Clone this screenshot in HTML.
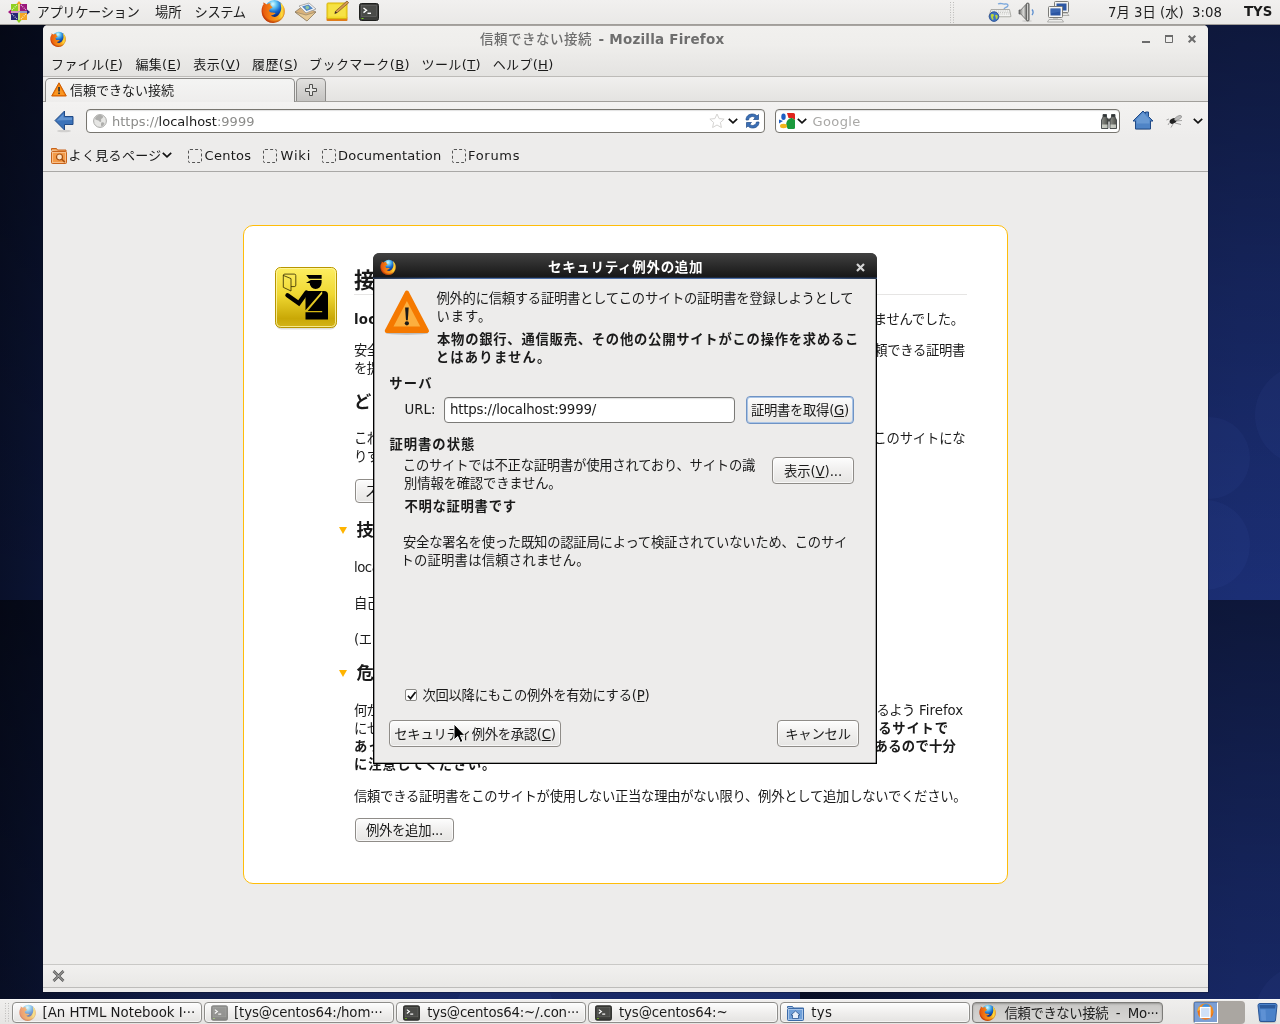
<!DOCTYPE html>
<html lang="ja">
<head>
<meta charset="utf-8">
<title>信頼できない接続 - Mozilla Firefox</title>
<style>
*{box-sizing:border-box;margin:0;padding:0}
html,body{width:1280px;height:1024px;overflow:hidden}
body{font-family:"DejaVu Sans","Liberation Sans","Noto Sans CJK JP",sans-serif;font-size:13px;color:#1a1a1a;position:relative;background:#0b1535}
#root{position:absolute;left:0;top:0;width:1280px;height:1024px;overflow:hidden;will-change:transform}
.abs{position:absolute}
.t{position:absolute;white-space:nowrap;line-height:20px;height:20px}
#win .t{line-height:22px}
u{text-decoration:underline;text-underline-offset:1px}
/* desktop wallpaper */
.wt{position:absolute;width:800px;height:600px;overflow:hidden;
 background:
 linear-gradient(180deg,rgba(0,0,0,.5) 0,rgba(0,0,0,.36) 25%,rgba(0,0,0,.22) 50%,rgba(0,0,0,.1) 75%,rgba(0,0,0,0) 100%),
 linear-gradient(90deg,#09102a 0,#0a122e 20px,#0e1942 100px,#152458 200px,#182968 300px,#1b2e74 440px,#1d327c 800px)}
.wt i{position:absolute;border-radius:50%;background:rgba(120,150,255,.045)}
/* top panel */
#tp{left:0;top:0;width:1280px;height:25px;background:linear-gradient(#f1f0ef,#eae9e7);border-bottom:1px solid #a19e9a;z-index:5}
#bp{left:0;top:999px;width:1280px;height:25px;background:linear-gradient(#efeeed,#e6e5e3);border-top:1px solid #fafafa}
/* firefox window */
#win{left:43px;top:25px;width:1165px;height:967px;background:#edeceb;border-radius:5px 5px 0 0;box-shadow:0 0 0 1px rgba(10,12,30,.3)}
#tm{left:0;top:0;width:100%;height:51px;border-radius:5px 5px 0 0;background:linear-gradient(#a7a4a0 0,#a7a4a0 1px,#f1f0ee 1px,#efeeec 20px,#e4e3e1 51px)}
#titlebar{left:0;top:0;width:100%;height:27px}
#menubar{left:0;top:27px;width:100%;height:25px;border-bottom:1px solid #bdbbb8}

/* icons */
.ic{position:absolute;overflow:visible}
#tp .t{top:2px;font-size:13.3px;color:#1c1c1c}

#win .t{font-size:13px}
#tabbar{left:0;top:52px;width:100%;height:25px;background:linear-gradient(#f0efee,#e4e3e1);border-bottom:1px solid #a19f9b}
#tab1{left:2px;top:53px;width:250px;height:25px;background:linear-gradient(#f4f4f3,#eeedec);border:1px solid #8d8c8a;border-bottom:none;border-radius:5px 5px 0 0}
#tabnew{left:253px;top:53px;width:30px;height:23px;background:linear-gradient(#e2e1df,#d3d2d0 50%,#c5c4c2);border:1px solid #8d8c8a;border-bottom:none;border-radius:5px 5px 0 0}
#navbar{left:0;top:77px;width:100%;height:37px;background:linear-gradient(#f3f2f1,#edeceb)}
.field{position:absolute;top:84px;height:24px;background:#fff;border:1px solid #77756f;border-radius:4px;box-shadow:inset 0 1px 1px rgba(0,0,0,.12)}
#bmbar{left:0;top:114px;width:100%;height:33px;background:#edeceb;border-bottom:1px solid #a9a8a6}
.bmi{position:absolute;top:124px;width:14px;height:14px;border:1px dashed #555;border-radius:2px}
#content{left:0;top:147px;width:100%;height:792px;background:#edeceb;overflow:hidden}
#status{left:0;top:939px;width:100%;height:24px;background:linear-gradient(#f1f0ef,#e9e8e6);border-top:1px solid #c9c8c6;border-bottom:1px solid #bdbcba}

#pg{position:absolute;left:-43px;top:-172px;width:1280px;height:1024px}
#errc{position:absolute;left:243px;top:225px;width:765px;height:659px;background:#fff;border:1px solid #ffbd09;border-radius:10px}
#pg .p b{letter-spacing:.3px}
#pg .p .fx b{letter-spacing:inherit}
#pg .p{letter-spacing:-.5px;position:absolute;white-space:nowrap;font-size:13.330px;line-height:18px;height:18px;color:#1a1a1a}
#pg h1{position:absolute;left:354px;top:266px;width:613px;height:29px;font-size:21.300px;font-weight:bold;line-height:30px;border-bottom:1px solid #e6e5e4;white-space:nowrap;overflow:hidden}
#pg h2{position:absolute;left:354px;font-size:17.300px;font-weight:normal;line-height:24px;height:24px;white-space:nowrap}
#pg h2.b{font-weight:bold}
.tri{position:absolute;width:0;height:0;border-left:4px solid transparent;border-right:4px solid transparent;border-top:7px solid #ffb400}
.btn{position:absolute;height:24px;border:1px solid #8f8c88;border-radius:4px;background:linear-gradient(#fdfdfd,#f1f0ef 45%,#e6e5e3);font-size:13.330px;letter-spacing:-.3px;line-height:24.500px;text-align:center;white-space:nowrap;color:#1a1a1a;box-shadow:inset 0 0 0 1px rgba(255,255,255,.7)}

#dlg{left:373px;top:253px;width:504px;height:511px;background:#edeceb;border:1px solid #000;border-top:none;border-radius:7px 7px 0 0;box-shadow:inset 1px 0 0 rgba(0,0,0,.35),inset -1px 0 0 rgba(0,0,0,.3),inset 0 -1px 0 rgba(0,0,0,.3)}
#dtitle{left:-1px;top:0;width:504px;height:26px;border-radius:6px 6px 0 0;background:linear-gradient(#414141,#2c2c2c 45%,#181818 90%,#1c2638 94%,#4a6a9c 100%)}
#dlg .t{font-size:13.330px;letter-spacing:-.45px;line-height:18px;height:18px;color:#1a1a1a}
#dlg .btn{font-size:13.330px;letter-spacing:-.45px;height:27px;line-height:27px}
.inp{position:absolute;background:#fff;border:1px solid #7b7a77;border-radius:4px;box-shadow:inset 0 1px 1px rgba(0,0,0,.13)}

.tb{position:absolute;top:2px;height:21px;width:190px;border:1px solid #8e8d8a;border-radius:4px;background:linear-gradient(#fdfdfd,#f0efee 50%,#e4e3e1);box-shadow:inset 0 0 0 1px rgba(255,255,255,.6)}
.tb.act{background:linear-gradient(#c9c8c6,#d6d5d3);box-shadow:inset 0 1px 2px rgba(0,0,0,.25);border-color:#7d7c79}
.tb .t{left:30px;top:0px;font-size:13.330px;color:#1a1a1a;letter-spacing:0}
.tb .ic{left:6px;top:2px}
</style>
</head>
<body>
<div id="root">
<svg width="0" height="0" style="position:absolute">
<defs>
<radialGradient id="ffg" cx="42%" cy="22%" r="75%"><stop offset="0" stop-color="#d8fbff"/><stop offset=".28" stop-color="#5fc3f2"/><stop offset=".6" stop-color="#1565c8"/><stop offset="1" stop-color="#061a6e"/></radialGradient>
<linearGradient id="fff" x1="0" y1="0" x2="1" y2="0"><stop offset="0" stop-color="#e4520c"/><stop offset=".35" stop-color="#f47c12"/><stop offset=".7" stop-color="#f9a21c"/><stop offset=".88" stop-color="#ffdf3e"/><stop offset="1" stop-color="#e8901c"/></linearGradient>
<radialGradient id="ffs" gradientUnits="userSpaceOnUse" cx="12.800" cy="10.500" r="13.500"><stop offset=".78" stop-color="#a01800" stop-opacity="0"/><stop offset="1" stop-color="#a01800" stop-opacity=".75"/></radialGradient>
<symbol id="ff" viewBox="0 0 24 24">
<circle cx="13.300" cy="10.200" r="9.200" fill="url(#ffg)"/>
<path d="M2.500 3.600C3.700 4.300 4.800 5 5.900 5.400 7.200 4.500 8.400 4.200 9.700 4.300 9.200 5 9.100 5.600 9.500 6.200 10.300 7.100 11.100 7.600 11.700 8.400 10.700 8.900 9.800 9.200 9.200 9.900 8.600 10.400 8.200 10.800 8.100 11.300 8.400 12.700 9.300 13.500 10.500 13.600 12 13.700 13.300 13.600 14.700 14.300 13.800 15.200 12.400 15.700 10 16.600 11.200 17.600 12.400 18 13.800 18 16 17.600 17.600 16.300 18.300 14.800 19.600 12.900 20.300 10.900 20.200 8.800 20.100 7 19.800 5.300 19.400 3.500 21.300 5 22.800 7 23.500 9.500 24.400 13.400 23.300 17.600 20.300 20.600 17.200 23.600 12.800 24.600 8.800 23.400 4.300 22 1 17.900.7 12.700.5 9.800 1.200 7.200 2.700 5.300 2.500 4.700 2.400 4.200 2.500 3.600z" fill="url(#fff)"/><path d="M2.500 3.600C3.700 4.300 4.800 5 5.900 5.400 7.200 4.500 8.400 4.200 9.700 4.300 9.200 5 9.100 5.600 9.500 6.200 10.300 7.100 11.100 7.600 11.700 8.400 10.700 8.900 9.800 9.200 9.200 9.900 8.600 10.400 8.200 10.800 8.100 11.300 8.400 12.700 9.300 13.500 10.500 13.600 12 13.700 13.300 13.600 14.700 14.300 13.800 15.200 12.400 15.700 10 16.600 11.200 17.600 12.400 18 13.800 18 16 17.600 17.600 16.300 18.300 14.800 19.600 12.900 20.300 10.900 20.200 8.800 20.100 7 19.800 5.300 19.400 3.500 21.300 5 22.800 7 23.500 9.500 24.400 13.400 23.300 17.600 20.300 20.600 17.200 23.600 12.800 24.600 8.800 23.400 4.300 22 1 17.900.7 12.700.5 9.800 1.200 7.200 2.700 5.300 2.500 4.700 2.400 4.200 2.500 3.600z" fill="url(#ffs)"/>

</symbol>
<symbol id="term" viewBox="0 0 20 18">
<rect x=".5" y=".5" width="19" height="17" rx="2" fill="#3c3d3a" stroke="#1f201e"/>
<rect x="2.500" y="2.500" width="15" height="11" fill="#4a4b48" stroke="#6b6c69" stroke-width=".6"/>
<path d="M4.500 5l3 2.300-3 2.300" stroke="#fff" stroke-width="1.400" fill="none"/><path d="M8.500 10.300h3.500" stroke="#fff" stroke-width="1.400"/>
<rect x="2.500" y="15" width="2" height="1" fill="#7ed321"/>
</symbol>
</defs></svg>
<div class="wt" style="left:0px;top:0px"><i style="left:368px;top:417px;width:82px;height:82px"></i><i style="left:455px;top:365px;width:100px;height:100px"></i><i style="left:360px;top:500px;width:90px;height:90px"></i></div><div class="wt" style="left:800px;top:0px"><i style="left:368px;top:417px;width:82px;height:82px"></i><i style="left:455px;top:365px;width:100px;height:100px"></i><i style="left:360px;top:500px;width:90px;height:90px"></i></div><div class="wt" style="left:0px;top:600px"><i style="left:368px;top:417px;width:82px;height:82px"></i><i style="left:455px;top:365px;width:100px;height:100px"></i><i style="left:360px;top:500px;width:90px;height:90px"></i></div><div class="wt" style="left:800px;top:600px"><i style="left:368px;top:417px;width:82px;height:82px"></i><i style="left:455px;top:365px;width:100px;height:100px"></i><i style="left:360px;top:500px;width:90px;height:90px"></i></div>
<div id="tp" class="abs">
<svg class="ic" style="left:8px;top:1px" width="22" height="22" viewBox="0 0 22 22">
<path d="M11 0l3 3.500h-6z" fill="#f5a623"/><path d="M22 11l-3.500 3v-6z" fill="#262577"/><path d="M11 22l-3-3.500h6z" fill="#8fd01f"/><path d="M0 11l3.500-3v6z" fill="#a3177f"/>
<rect x="3" y="3" width="7" height="7" fill="#8fd01f"/><rect x="12" y="3" width="7" height="7" fill="#9a177c"/><rect x="3" y="12" width="7" height="7" fill="#262577"/><rect x="12" y="12" width="7" height="7" fill="#f5a623"/>
<rect x="10" y="3" width="2" height="8" fill="#f8c97a"/><rect x="11" y="10" width="8" height="2" fill="#9a9ac4"/><rect x="10" y="11" width="2" height="8" fill="#c4e58a"/><rect x="3" y="10" width="8" height="2" fill="#d493c3"/>
<path d="M4 9l5-5M13 4l5 5M4 13l5 5M13 18l5-5" stroke="#fff" stroke-width="1.200" stroke-dasharray="1 1" opacity=".7"/>
</svg>
<div class="t" style="left:36.500px;top:3px;letter-spacing:-.4px">アプリケーション</div>
<div class="t" style="left:155px;top:3px">場所</div>
<div class="t" style="left:194.500px;top:3px;letter-spacing:-.4px">システム</div>
<svg class="ic" style="left:261px;top:-1px" width="24" height="24"><use href="#ff"/></svg>
<svg class="ic" style="left:294px;top:3px" width="23" height="19" viewBox="0 0 23 19">
<path d="M1 9l8-6 13 6-9 9z" fill="#d9b27a" stroke="#8a7a62" stroke-width=".8"/>
<path d="M1 9l11 3 10-3-9 9z" fill="#e7c994" stroke="#8a7a62" stroke-width=".6"/>
<path d="M5 3l10-3 7 6-10 4z" fill="#f4f4f4" stroke="#9a9a9a" stroke-width=".8"/>
<path d="M8 3.500l6.500-2 4.500 4-6.500 2.500z" fill="#4f86c6"/><circle cx="13.300" cy="4.600" r="1.800" fill="#8fc7a0"/>
</svg>
<svg class="ic" style="left:326px;top:0" width="24" height="22" viewBox="0 0 24 22">
<rect x=".5" y="17" width="21" height="4" rx="1" fill="#e07d1a"/>
<rect x="1" y="3" width="20" height="15.500" rx="1" fill="#f3da2b" stroke="#d9b50f"/>
<rect x="2.500" y="4.500" width="17" height="12" fill="#f7e652" opacity=".7"/>
<path d="M21 1l1.700 1.700-11.500 10-2.400.9.700-2.400z" fill="#d59a54" stroke="#7a5220" stroke-width=".7"/>
<path d="M8.800 13.600l.7-2.400 1.700 1.500z" fill="#222"/>
</svg>
<svg class="ic" style="left:359px;top:3px" width="20" height="18"><use href="#term"/></svg>
<svg class="ic" style="left:949px;top:2px" width="6" height="21"><path d="M1.500 0v21M4.500 0v21" stroke="#bdbcba" stroke-width="1" stroke-dasharray="1 1.500"/></svg>
<svg class="ic" style="left:988px;top:2px" width="24" height="21" viewBox="0 0 24 21">
<path d="M10 2c3-1.500 4 .5 7 0s3.500 1.500 2.500 2.500-3 1-3.500 2.500" stroke="#7aa7dc" stroke-width="1.300" fill="none"/>
<path d="M3 7.500h18.500l1.500 7h-22z" fill="#f4f4f2" stroke="#9a9a96" stroke-width=".8"/>
<path d="M3.500 9h17.500M3 10.500h18.500M2.600 12h19.300" stroke="#c2c2be" stroke-width=".9" stroke-dasharray="1.200 1"/>
<path d="M1.500 14.500h21v1.200h-21z" fill="#d6d6d2"/>
<circle cx="6" cy="14.600" r="4.800" fill="#3f74c4" stroke="#2a4f8f" stroke-width=".9"/>
<path d="M3 12.500c1.200-.8 2.600-.3 3 .6.300.9-.8 1.300-.9 2.200s.9 1.500.2 2.500c-.9.300-1.600-.9-2-1.900s-.9-2.300-.3-3.400zM7.500 13c.8-.4 1.800 0 2.300.9 0 1.300-.5 2.600-1.600 3.400-.5-.8-.3-1.800-.7-2.600s-.5-1.200 0-1.700z" fill="#b9d43c"/>
</svg>
<svg class="ic" style="left:1018px;top:2px" width="18" height="20" viewBox="0 0 18 20">
<defs><linearGradient id="spk" x1="0" y1="0" x2="1" y2="0"><stop offset="0" stop-color="#6a6a68"/><stop offset=".55" stop-color="#d9d9d7"/><stop offset="1" stop-color="#7a7a78"/></linearGradient></defs>
<ellipse cx="9" cy="19" rx="5" ry=".8" fill="#000" opacity=".15"/>
<path d="M1 8h1.800l5-5.500h1v15h-1l-5-5.500H1z" fill="url(#spk)" stroke="#555553" stroke-width=".7"/>
<rect x="8.300" y="1" width="2.800" height="18" rx="1.200" fill="#8c8c8a" stroke="#4e4e4c" stroke-width=".7"/>
<rect x="9" y="2" width="1" height="16" fill="#d0d0ce"/>
<path d="M14 7.500c1.300 1.600 1.300 3.900 0 5.500" stroke="#5d8fd0" stroke-width="1.300" fill="none"/>
</svg>
<svg class="ic" style="left:1047px;top:1px" width="23" height="22" viewBox="0 0 23 22">
<rect x="7.500" y=".5" width="14" height="11" rx="1" fill="#f1f1ef" stroke="#7b7b78"/><rect x="9.500" y="2.500" width="10" height="7" fill="#2c56a3"/>
<path d="M15 12h5l2 2.500h-7z" fill="#e8e8e6" stroke="#8a8a86" stroke-width=".6"/>
<rect x="1.500" y="5.500" width="14" height="11" rx="1" fill="#f6f6f4" stroke="#7b7b78"/><rect x="3.500" y="7.500" width="10" height="7" fill="#2c56a3"/><path d="M3.500 7.500h10v3l-10 2z" fill="#4a76bf" opacity=".5"/>
<path d="M6 17h5v1.200H6z" fill="#c8c8c6"/><path d="M2 18.500h13l1.500 2.500h-16z" fill="#ededeb" stroke="#8a8a86" stroke-width=".6"/>
</svg>
<div class="t" style="left:1108px;top:3px;font-size:13.3px">7月 3日 (水)&nbsp; 3:08</div>
<div class="t" style="left:1244px;font-weight:bold;font-size:13.3px">TYS</div>
</div>
<div id="win" class="abs">
 <div id="tm" class="abs"></div>
 <div id="titlebar" class="abs">
  <svg class="ic" style="left:7px;top:6px" width="16" height="16"><use href="#ff"/></svg>
  <div class="t" id="wt1" style="letter-spacing:0.500px;left:437.0px;top:3px;color:#6e6e6e;font-size:13.500px;font-weight:500">信頼できない接続</div><div class="t" id="wt2" style="letter-spacing:0.219px;left:555.5px;top:3px;color:#6e6e6e;font-size:13.500px;font-weight:bold">-&nbsp;Mozilla Firefox</div>
  <svg class="ic" style="left:1099px;top:10px" width="56" height="9" viewBox="0 0 56 9"><rect x="0" y="6" width="8" height="2" fill="#6b6b6b"/><path d="M23.500 1.500h7v6h-7z" fill="none" stroke="#6b6b6b"/><rect x="23" y="0" width="8" height="2" fill="#6b6b6b"/><path d="M46.700 .7l6.600 6.600M53.300 .7l-6.600 6.600" stroke="#6b6b6b" stroke-width="2"/></svg>
 </div>
 <div id="menubar" class="abs">
  <div class="t" id="m1" style="letter-spacing:0.375px;left:8.0px;top:2px">ファイル(<u>F</u>)</div>
  <div class="t" id="m2" style="letter-spacing:0.312px;left:92.5px;top:2px">編集(<u>E</u>)</div>
  <div class="t" id="m3" style="letter-spacing:0.500px;left:150.2px;top:2px">表示(<u>V</u>)</div>
  <div class="t" id="m4" style="letter-spacing:0.375px;left:209.0px;top:2px">履歴(<u>S</u>)</div>
  <div class="t" id="m5" style="letter-spacing:0.438px;left:266.0px;top:2px">ブックマーク(<u>B</u>)</div>
  <div class="t" id="m6" style="letter-spacing:0.400px;left:378.5px;top:2px">ツール(<u>T</u>)</div>
  <div class="t" id="m7" style="letter-spacing:0.300px;left:449.8px;top:2px">ヘルプ(<u>H</u>)</div>
 </div>
 <div id="tabbar" class="abs"></div>
 <div id="tab1" class="abs">
  <svg class="ic" style="left:5px;top:3px" width="16" height="15" viewBox="0 0 16 15"><path d="M8 .8L15.300 14H.7z" fill="#f57900" stroke="#ce5c00" stroke-linejoin="round"/><path d="M8 2.800L13.600 13H2.400z" fill="#fcaf3e" opacity=".55"/><rect x="7.200" y="5" width="1.700" height="4.500" fill="#2e3436"/><rect x="7.200" y="10.500" width="1.700" height="1.600" fill="#2e3436"/></svg>
  <div class="t" id="tabt" style="letter-spacing:0.000px;left:24.0px;top:1px">信頼できない接続</div>
 </div>
 <div id="tabnew" class="abs"><svg class="ic" style="left:8px;top:5px" width="12" height="12" viewBox="0 0 12 12"><path d="M4.500.5h3v4h4v3h-4v4h-3v-4h-4v-3h4z" fill="#e6e6e4" stroke="#4f4f4d"/></svg></div>
 <div id="navbar" class="abs"></div>
 <svg class="ic" style="left:11px;top:84px" width="20" height="24" viewBox="0 0 20 24"><ellipse cx="10" cy="22" rx="7" ry="1.300" fill="#000" opacity=".12"/><path d="M1 11.500L10.500 2v5.500h8.500v8h-8.500V21z" fill="#3b72b9" stroke="#204a87" stroke-linejoin="round"/><path d="M2.700 11.500l6.800-6.800v3.800h8.500v2.500z" fill="#6d9bd4" opacity=".8"/></svg>
 <div class="field" style="left:43px;width:679px"></div>
 <svg class="ic" style="left:50px;top:89px" width="14" height="14" viewBox="0 0 14 14"><circle cx="7" cy="7" r="6.400" fill="#e6e6e4" stroke="#aaaaa8" stroke-width="1"/><path d="M4.500 1.500c2-.8 4.500-.3 5.500 1 .3 1.200-.8 1.800-1.800 2.500-.6 1 .6 1.800-.2 2.800-1 .5-1.800-.3-2.500-1.300-1.200-.6-2.700-.5-3.500-1.500.3-1.500 1.200-2.800 2.500-3.500zM8.500 8.500c1-.4 2.300 0 3 .8-.5 1.500-1.500 2.600-3 3.200-.6-1.200-.8-2.800 0-4z" fill="#aeaeac"/></svg>
 <div class="t" id="urltext" style="letter-spacing:0.000px;left:69.0px;top:86px;color:#8c8c8a">https://<span style="color:#1a1a1a">localhost</span>:9999</div>
 <svg class="ic" style="left:666px;top:88px" width="16" height="16" viewBox="0 0 16 16"><path d="M8 1l2.100 4.600 5 .5-3.700 3.400 1 5L8 12l-4.400 2.500 1-5L.9 6.100l5-.5z" fill="#fff" stroke="#d4d3d1" stroke-width="1"/></svg>
 <svg class="ic" style="left:685px;top:93px" width="10" height="6" viewBox="0 0 10 6"><path d="M.8.800L5 4.800 9.200.8" fill="none" stroke="#111" stroke-width="1.700"/></svg>
 <svg class="ic" style="left:702px;top:88px" width="15" height="16" viewBox="0 0 15 16"><path d="M1 7C1 3 4 1 7.500 1c2 0 3.500.8 4.500 2l1.500-1.500v5h-5l1.700-1.700C9.500 4 8.500 3.500 7.500 3.500 5.500 3.500 3.800 5 3.500 7z" fill="#3b6fb6" stroke="#204a87" stroke-width=".7"/><path d="M14 9c0 4-3 6-6.500 6-2 0-3.500-.8-4.500-2l-1.500 1.500v-5h5L4.800 11.200c.7.800 1.700 1.300 2.700 1.300 2 0 3.700-1.500 4-3.500z" fill="#3b6fb6" stroke="#204a87" stroke-width=".7"/></svg>
 <div class="field" style="left:732px;width:345px"></div>
 <svg class="ic" style="left:736px;top:88px" width="16" height="16" viewBox="0 0 16 16"><rect x="0" y="0" width="16" height="16" rx="1.500" fill="#fff"/><path d="M8 0h6.500A1.500 1.500 0 0 1 16 1.500V7l-3-2H9.500z" fill="#e0231c"/><path d="M16 7v7.500a1.500 1.500 0 0 1-1.500 1.500H9c-2-2-2.500-5-1-8 1.500-2.500 4-3.500 5-3z" fill="#1a9a3c"/><ellipse cx="4.500" cy="3.800" rx="2.200" ry="3.200" fill="#1f5fc4"/><path d="M0 6.500l4 1.500-4 2.500z" fill="#1f5fc4"/><ellipse cx="4.500" cy="13" rx="3.500" ry="2.200" fill="#f1b51c"/></svg>
 <svg class="ic" style="left:754px;top:93px" width="10" height="6" viewBox="0 0 10 6"><path d="M.8.800L5 4.800 9.200.8" fill="none" stroke="#111" stroke-width="1.700"/></svg>
 <div class="t" id="goog" style="letter-spacing:0.400px;left:769.5px;top:86px;color:#a9a8a6">Google</div>
 <svg class="ic" style="left:1058px;top:89px" width="16" height="15" viewBox="0 0 16 15"><defs><linearGradient id="bing" x1="0" y1="0" x2="1" y2="0"><stop offset="0" stop-color="#8d8f8a"/><stop offset=".5" stop-color="#6d6f6a"/><stop offset="1" stop-color="#4b4d49"/></linearGradient></defs><rect x="6" y="4.500" width="4" height="3" fill="#555753"/><path d="M2 .5h3.500v2.500l1.500 3v8.500h-6.500v-8.500l1.500-3z" fill="url(#bing)" stroke="#2e3436" stroke-width=".8"/><path d="M10.500 .5h3.500v2.500l1.500 3v8.500h-6.500v-8.500l1.500-3z" fill="url(#bing)" stroke="#2e3436" stroke-width=".8"/><rect x="1" y="10.500" width="5.500" height="3.500" fill="#d3d7cf" opacity=".85"/><rect x="9.500" y="10.500" width="5.500" height="3.500" fill="#d3d7cf" opacity=".85"/><rect x="2.300" y=".8" width="2.900" height="2" fill="#2e3436"/><rect x="10.800" y=".8" width="2.900" height="2" fill="#2e3436"/></svg>
 <svg class="ic" style="left:1089px;top:85px" width="22" height="20" viewBox="0 0 22 20"><ellipse cx="11" cy="19.200" rx="8" ry=".8" fill="#000" opacity=".15"/><path d="M11 1L1 11h2.500v8h15v-8H21L16.500 6.500V2h-3v1.500z" fill="#4f84c6" stroke="#204a87" stroke-linejoin="round"/><path d="M11 2.800L4.500 9.500v4h13v-4z" fill="#7aa6dc" opacity=".6"/></svg>
 <svg class="ic" style="left:1123px;top:89px" width="18" height="14" viewBox="0 0 18 14"><ellipse cx="7" cy="7" rx="3.500" ry="2.600" fill="#222" transform="rotate(-25 7 7)"/><ellipse cx="12" cy="4" rx="4" ry="1.800" fill="#bbb" stroke="#777" stroke-width=".5" transform="rotate(-30 12 4)"/><path d="M3 5L.5 6M3.500 8.500L2 11M7 10l-2 3.500M9 9l6 1.500M10 7l6-.5" stroke="#666" stroke-width=".7" opacity=".8"/></svg>
 <svg class="ic" style="left:1150px;top:93px" width="10" height="6" viewBox="0 0 10 6"><path d="M.8.800L5 4.800 9.200.8" fill="none" stroke="#111" stroke-width="1.700"/></svg>
 <div id="bmbar" class="abs"></div>
 <svg class="ic" style="left:8px;top:122px" width="16" height="17" viewBox="0 0 16 17"><path d="M.5 3.500V1.500h5l1 1.500h8.500v1.500" fill="#f0a45a" stroke="#c8631a"/><rect x=".5" y="4.500" width="15" height="12" rx="1" fill="#f39a48" stroke="#c8631a"/><rect x="1.500" y="5.500" width="13" height="10" fill="none" stroke="#f9c99a" stroke-width=".8"/><circle cx="8.500" cy="10" r="3" fill="#fbe3c8" stroke="#a85010" stroke-width="1.200"/><path d="M10.800 12.300l3 3" stroke="#a85010" stroke-width="1.600"/></svg>
 <div class="t" id="bm0" style="left:25.6px;top:120px;letter-spacing:0.333px">よく見るページ</div>
 <svg class="ic" style="left:119px;top:127px" width="10" height="6" viewBox="0 0 10 6"><path d="M.8.800L5 4.800 9.200.8" fill="none" stroke="#111" stroke-width="1.700"/></svg>
 <div class="bmi" style="left:145px"></div><div class="t" id="bm1" style="letter-spacing:0.240px;left:161.6px;top:120px">Centos</div>
 <div class="bmi" style="left:220px"></div><div class="t" id="bm2" style="letter-spacing:0.833px;left:237.5px;top:120px">Wiki</div>
 <div class="bmi" style="left:279px"></div><div class="t" id="bm3" style="letter-spacing:0.250px;left:295.0px;top:120px">Documentation</div>
 <div class="bmi" style="left:409px"></div><div class="t" id="bm4" style="letter-spacing:0.700px;left:425.0px;top:120px">Forums</div>
 <div id="content" class="abs"><div id="pg">
<div id="errc"></div>
<svg class="ic" style="left:274px;top:266px" width="64" height="66" viewBox="0 0 64 66">
<defs><linearGradient id="sslg" x1="0" y1="0" x2="0" y2="1"><stop offset="0" stop-color="#fdee62"/><stop offset=".45" stop-color="#f0d832"/><stop offset=".85" stop-color="#c9a806"/><stop offset="1" stop-color="#d4b41c"/></linearGradient></defs>
<rect x="2" y="3" width="60" height="60.500" rx="5" fill="#000" opacity=".13"/>
<rect x="1.500" y="1.500" width="61" height="60" rx="5" fill="url(#sslg)" stroke="#b89600" stroke-width="1"/>
<rect x="2.500" y="2.500" width="59" height="58" rx="4" fill="none" stroke="#fff6a8" stroke-width="1" opacity=".8"/>
<path d="M32.200 9H47.600V12.800H35.100z" fill="#000"/>
<path d="M36.700 14H47.600V17H47.500a5.900 5.900 0 0 1-11.800 0H32z" fill="#000"/>
<path d="M31.500 25H50a4 4 0 0 1 4 4V53.500H31.500V46.300H48.200V45H33.700L48.200 27.700V25.100L31.500 44.200z" fill="#000" fill-rule="evenodd"/>
<path d="M32.500 26.500L24.800 37.300 13.500 29.300" fill="none" stroke="#000" stroke-width="4.400" stroke-linecap="round" stroke-linejoin="miter"/>
<path d="M9.300 9.600a1.500 1.500 0 0 1 1.500-1.500h9.500a1.500 1.500 0 0 1 1.500 1.500v9.500a1.500 1.500 0 0 1-1.500 1.500H17" fill="none" stroke="#2e2600" stroke-width=".8"/>
<path d="M9.300 9.400L17 12.600V25L9.300 21.300z" fill="none" stroke="#2e2600" stroke-width=".8" stroke-linejoin="round"/>
</svg>
<h1>接続の安全性を確認できません</h1>
<div class="p" id="p1" style="left:354px;top:311px"><b>localhost:9999</b><span class="fx" id="f1" style="letter-spacing:0.054px"> への接続は安全性が求められていますが、接続の安全性を確認でき</span><span style="letter-spacing:-.33px">ませんでした。</span></div>
<div class="p" id="p2" style="left:354px;top:342px">安<span class="fx" id="f2" style="letter-spacing:0.032px">全に接続する場合は通常、あなたが適切な相手と通信することを確認できるよう、信</span><span style="letter-spacing:-.33px">頼できる証明書</span></div>
<div class="p" id="p3" style="left:354px;top:360px">を提供してきますが、このサイトの証明書は信頼性を検証できません。</div>
<h2 class="b" id="h2a" style="top:390px;left:354px">どうすればよいのか？</h2>
<div class="p" id="p4" style="left:354px;top:430px">こ<span class="fx" id="f4" style="letter-spacing:-0.342px">れまでこのサイトに問題なく接続できていた場合、このエラーが表示されるのは誰かが</span><span style="letter-spacing:-.15px">このサイトにな</span></div>
<div class="p" id="p5" style="left:354px;top:448px">りすましている可能性があり、接続すべきではありません。</div>
<div class="btn" style="left:355px;top:479px;width:150px">スタートページに戻る</div>
<div class="tri" style="left:338.500px;top:527px"></div>
<h2 class="b" id="h2b" style="top:518px;left:356.500px">技術的な詳細を表示</h2>
<div class="p" id="p6" style="left:354px;top:559px">localhost:9999 は不正なセキュリティ証明書を使用しています。</div>
<div class="p" id="p7" style="left:354px;top:595px">自己署名をしているためこの証明書は信頼されません。</div>
<div class="p" id="p8" style="left:354px;top:631px">(エラーコード: sec_error_untrusted_issuer)</div>
<div class="tri" style="left:338.500px;top:670px"></div>
<h2 class="b" id="h2c" style="top:661px;left:356.500px">危険性を理解した上で接続するには</h2>
<div class="p" id="p9" style="left:354px;top:702px">何<span class="fx" id="f9" style="letter-spacing:-0.218px">が起こっているのかを十分に理解できているのであれば、このサイトの証明書を信頼す</span><span style="letter-spacing:-.5px">るよう</span><span style="letter-spacing:0"> Firefox</span></div>
<div class="p" id="p10" style="left:354px;top:720px">に<span class="fx" id="f10" style="letter-spacing:0.559px">セキュリティ例外として追加するよう指示できます。<b>たとえこのサイトが信頼でき</b></span><b style="letter-spacing:.8px">るサイトで</b></div>
<div class="p" id="p11" style="left:354px;top:738px"><b>あ<span class="fx" id="f11" style="letter-spacing:0.069px">っても、このエラーが表示されるのは、誰かがあなたの接続に干渉している可能性が</span><span style="letter-spacing:.27px">あるので十分</span></b></div>
<div class="p" id="p12" style="left:354px;top:756px"><b id="f12" class="fx" style="letter-spacing:0.980px">に注意してください。</b></div>
<div class="p" id="p13" style="left:354px;top:788px"><span class="fx" id="f13" style="letter-spacing:-0.266px">信頼できる証明書をこのサイトが使用しない正当な理由がない限り、例外として追加しないでください。</span></div>
<div class="btn" id="addex" style="left:355px;top:818px;width:99px">例外を追加...</div>
</div></div>
 <div id="status" class="abs"><svg class="ic" style="left:9px;top:5px" width="13" height="12" viewBox="0 0 13 12"><path d="M1.500 1l10 10M11.500 1l-10 10" stroke="#555" stroke-width="2.600"/><path d="M1.500 1l10 10M11.500 1l-10 10" stroke="#bdbdbb" stroke-width="1"/></svg></div>
</div>
<div id="dlg" class="abs">
 <div id="dtitle" class="abs">
  <svg class="ic" style="left:7px;top:5.500px" width="16" height="16"><use href="#ff"/></svg>
  <div class="t" id="dt" style="left:175.0px;top:5px;color:#fff;font-weight:bold;font-size:13.500px;letter-spacing:0.680px">セキュリティ例外の追加</div>
  <svg class="ic" style="left:483px;top:10px" width="9" height="9" viewBox="0 0 9 9"><path d="M1 1l7 7M8 1l-7 7" stroke="#d6d6d6" stroke-width="2.200"/></svg>
 </div>
 <div class="abs" style="left:0;top:25px;width:502px;height:1px;background:linear-gradient(90deg,#27364f,#4d70a8 15%,#4d70a8 85%,#27364f)"></div>
 <svg class="ic" style="left:10px;top:36px" width="48" height="46" viewBox="0 0 48 46">
  <defs><linearGradient id="wg" x1="0" y1="0" x2="0" y2="1"><stop offset="0" stop-color="#f8a24a"/><stop offset="1" stop-color="#f57900"/></linearGradient></defs>
  <ellipse cx="22.900" cy="44.300" rx="21" ry="1.500" fill="#000" opacity=".2"/>
  <path d="M22.900 3.500L43 42H2.750z" fill="#f57900" stroke="#f57900" stroke-width="4" stroke-linejoin="round"/>
  
  <path d="M22.900 12L36.300 37.500H9.500z" fill="#fcaf3e"/>
  <path d="M21.100 18.500h3.600l-.9 12.800h-1.800z" fill="#1a1a1a"/><circle cx="22.900" cy="34.300" r="2.100" fill="#1a1a1a"/>
 </svg>
 <div class="t" id="d1" style="letter-spacing:-0.277px;left:62.5px;top:37px">例外的に信頼する証明書としてこのサイトの証明書を登録しようとして</div>
 <div class="t" id="d2" style="letter-spacing:1.017px;left:62.4px;top:55px">います。</div>
 <div class="t" id="d3" style="letter-spacing:0.743px;left:63.0px;top:78px"><b>本物の銀行、通信販売、その他の公開サイトがこの操作を求めるこ</b></div>
 <div class="t" id="d4" style="letter-spacing:1.193px;left:61.8px;top:96px"><b>とはありません。</b></div>
 <div class="t" id="d5" style="letter-spacing:1.225px;left:15.3px;top:122px"><b>サーバ</b></div>
 <div class="t" id="d6" style="left:30.500px;top:148px;letter-spacing:0">URL:</div>
 <div class="inp" style="left:70px;top:144px;width:291px;height:26px"></div>
 <div class="t" id="d7" style="left:76.0px;top:148px;letter-spacing:-0.195px">https://localhost:9999/</div>
 <div class="btn" id="bget" style="left:372px;top:143px;width:108px;letter-spacing:-.3px;height:28px;line-height:28px;border-color:#6f93c4;box-shadow:inset 0 0 0 1px #a9c4e6">証明書を取得(<u>G</u>)</div>
 <div class="t" id="d8" style="letter-spacing:0.930px;left:15.6px;top:183px"><b>証明書の状態</b></div>
 <div class="t" id="d9" style="letter-spacing:-0.231px;left:28.8px;top:204px">このサイトでは不正な証明書が使用されており、サイトの識</div>
 <div class="t" id="d10" style="letter-spacing:-0.177px;left:30.1px;top:222px">別情報を確認できません。</div>
 <div class="btn" id="bview" style="left:398px;top:204px;width:82px;letter-spacing:-.1px">表示(<u>V</u>)...</div>
 <div class="t" id="d11" style="letter-spacing:0.678px;left:30.6px;top:245px"><b>不明な証明書です</b></div>
 <div class="t" id="d12" style="letter-spacing:-0.223px;left:29.0px;top:281px">安全な署名を使った既知の認証局によって検証されていないため、このサイ</div>
 <div class="t" id="d13" style="letter-spacing:0.227px;left:26.4px;top:299px">トの証明書は信頼されません。</div>
 <div class="abs" style="left:31px;top:436px;width:12px;height:12px;background:#fff;border:1px solid #8a8986;border-radius:2px"></div>
 <svg class="ic" style="left:32.500px;top:437.500px" width="9.500" height="9.500" viewBox="0 0 10 10"><path d="M1 5l2.700 3L9 1" fill="none" stroke="#111" stroke-width="1.800"/></svg>
 <div class="t" id="d14" style="letter-spacing:-0.250px;left:48.4px;top:434px">次回以降にもこの例外を有効にする(<u>P</u>)</div>
 <div class="btn" id="bok" style="left:15px;top:467px;width:172px;letter-spacing:-.3px">セキュリティ例外を承認(<u>C</u>)</div>
 <div class="btn" id="bcancel" style="left:403px;top:467px;width:82px;letter-spacing:-.2px">キャンセル</div>
 <svg class="ic" style="left:79px;top:470px" width="13" height="21" viewBox="0 0 13 21"><path d="M1 1v16l3.700-3.600 2.600 6.100 2.600-1.100-2.600-6H12z" fill="#000" stroke="#fff" stroke-width="1" stroke-linejoin="round"/></svg>
</div>
<div id="bp" class="abs">
<svg class="ic" style="left:4px;top:3px" width="6" height="19"><path d="M1.500 0v19M4.500 0v19" stroke="#bdbcba" stroke-width="1" stroke-dasharray="1 1.500"/></svg>
<div class="tb" style="left:12px"><svg class="ic" width="17" height="17" style="top:1px;opacity:.55"><use href="#ff"/></svg><div class="t" id="tb1" style="left:29.5px;letter-spacing:-0.024px;">[An HTML Notebook I···</div></div>
<div class="tb" style="left:204px"><svg class="ic" width="17" height="16" style="opacity:.55"><use href="#term"/></svg><div class="t" id="tb2" style="left:29.0px;letter-spacing:-0.120px;">[tys@centos64:/hom···</div></div>
<div class="tb" style="left:396px"><svg class="ic" width="17" height="16"><use href="#term"/></svg><div class="t" id="tb3" style="left:30.2px;letter-spacing:-0.171px;">tys@centos64:~/.con···</div></div>
<div class="tb" style="left:588px"><svg class="ic" width="17" height="16"><use href="#term"/></svg><div class="t" id="tb4" style="left:30.0px;letter-spacing:-0.131px;">tys@centos64:~</div></div>
<div class="tb" style="left:780px"><svg class="ic" width="17" height="16" viewBox="0 0 17 16"><path d="M.5 3V1.500h5l1 1.500h10v2" fill="#9fbde2" stroke="#3b6aa8"/><rect x=".5" y="3.500" width="16" height="12" rx="1" fill="#6f9fd8" stroke="#3b6aa8"/><rect x="1.500" y="4.500" width="14" height="10" fill="none" stroke="#b6d0ee" stroke-width=".8"/><path d="M8.500 6l-4.500 4h1.500v3.500h6V10H13z" fill="#e8f0fa" stroke="#2c568f" stroke-width=".8"/></svg><div class="t" id="tb5" style="left:30.2px;letter-spacing:0.375px;">tys</div></div>
<div class="tb act" style="left:972px;width:191px"><svg class="ic" width="17" height="17" style="top:1px"><use href="#ff"/></svg><div class="t" id="tb6" style="left:31.6px;top:1px;letter-spacing:-0.394px">信頼できない接続 &nbsp;- &nbsp;Mo···</div></div>
<div class="abs" style="left:1193px;top:1px;width:52px;height:23px;background:#aaa6a1;border-radius:4px"></div>
<div class="abs" style="left:1194px;top:2px;width:24px;height:21px;background:#7c9fd4;border-right:1px solid #fff;border-bottom:1px solid #fff;border-left:1px solid #5b80b8;border-top:1px solid #5b80b8"></div>
<svg class="ic" style="left:1196px;top:2px" width="20" height="20" viewBox="0 0 20 20"><circle cx="9.500" cy="9.500" r="8" fill="#f08a1c"/><circle cx="10" cy="6" r="4" fill="#3f8fe0"/><path d="M2 6c-1 5 1 10 7 11.500 5 0 8-3 8.500-8-1 3-3 4-5 4-4 0-6-3-6-5z" fill="#e8701a"/><path d="M1.500 9.500a8 8 0 0 1 1.500-5l2 2.500 2-1.500" fill="#f7b23a"/><rect x="4.500" y="5.500" width="9.500" height="10" fill="#cfe0f7" stroke="#fff" stroke-width="1.200"/></svg>
<svg class="ic" style="left:1257px;top:3px" width="21" height="20" viewBox="0 0 21 20"><ellipse cx="10.500" cy="18.800" rx="9" ry="1.200" fill="#000" opacity=".18"/><path d="M1 2.500a2 2 0 0 1 2-2h15a2 2 0 0 1 2 2l-1.500 14.500a1.500 1.500 0 0 1-1.500 1.500H4a1.500 1.500 0 0 1-1.500-1.500z" fill="#4b82c9" stroke="#2a5595" stroke-width="1"/><path d="M2.500 2h16l-.5 3.500h-15z" fill="#2c5a9c"/><path d="M3.500 6.500h5l.5 11h-4.500z" fill="#6f9fdc" opacity=".55"/></svg>
</div>
</div>
</body>
</html>
